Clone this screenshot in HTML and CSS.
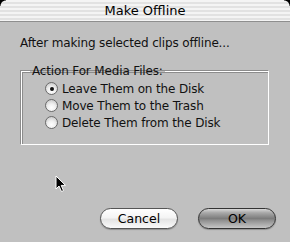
FILE: index.html
```html
<!DOCTYPE html>
<html>
    <head>
        <title>Make Offline</title>
        <link rel="stylesheet" href="styles.css">
    </head>
    <body>
    <div class="window">
        <header class="titlebar">
            <span class="corner left"></span>
            <h1>Make Offline</h1>
            <span class="corner right"></span>
        </header>
        <section class="content">
            <p class="intro">After making selected clips offline...</p>

            <fieldset class="group">
                <legend>Action For Media Files:</legend>
                <label class="radio"><span class="dot checked"></span>Leave Them on the Disk</label>
                <label class="radio"><span class="dot"></span>Move Them to the Trash</label>
                <label class="radio"><span class="dot"></span>Delete Them from the Disk</label>
            </fieldset>

            <div class="buttons">
                <button class="btn">Cancel</button>
                <button class="btn default">OK</button>
            </div>
        </section>

        <svg class="cursor" width="12" height="18" viewBox="0 0 12 18">
            <path d="M1 1 L1 14 L4 11 L6.5 16.5 L8.5 15.6 L6.2 10.4 L10.5 10.4 Z" fill="#000" stroke="#fff" stroke-width="1"/>
        </svg>
    </div>
    </body>
</html>
```

FILE: styles.css
```css
body{
    margin: 0;
    background-color: #c0c0c0;
    font-family: "DejaVu Sans", Verdana, sans-serif;
    font-size: 12px;
    letter-spacing: -0.15px;
    color: #111;
}

.window{
    position: relative;
    width: 290px;
    height: 242px;
    overflow: hidden;
    background-color: #c0c0c0;
}

.titlebar{
    position: relative;
    height: 21px;
    display: flex;
    align-items: center;
    justify-content: center;
    border-bottom: 1px solid #8e8e8e;
    background: repeating-linear-gradient(to bottom, #f4f4f4 0px, #f4f4f4 2px, #e2e2e2 2px, #e2e2e2 4px);
}

.titlebar h1{
    margin: 0;
    font-size: 13px;
    font-weight: normal;
    letter-spacing: 0;
    color: #000;
}

.corner{
    position: absolute;
    top: 0;
    width: 6px;
    height: 6px;
    background: #000;
}
.corner.left{
    left: 0;
    -webkit-mask: radial-gradient(circle at 6px 6px, transparent 5px, #000 6px);
}
.corner.right{
    right: 0;
    -webkit-mask: radial-gradient(circle at 0px 6px, transparent 5px, #000 6px);
}

.content{
    padding: 14px 21px 0 20px;
}

.intro{
    margin: 0 0 14px 0;
}

.group{
    margin: 0 0 0 1px;
    padding: 2px 10px 9px 23px;
    border: 1px solid #fff;
    box-shadow: inset 1px 1px 0 #8c8c8c, -1px -1px 0 #8c8c8c;
    height: 81px;
    box-sizing: border-box;
}

.group legend{
    padding: 0 2px;
    margin-left: -15px;
}

.radio{
    display: flex;
    align-items: center;
    height: 17px;
}

.dot{
    width: 11px;
    height: 11px;
    margin-right: 4px;
    border-radius: 50%;
    border: 1px solid #6a6a6a;
    background: radial-gradient(circle at 50% 70%, #ffffff 0%, #f0f0f0 40%, #bdbdbd 100%);
    position: relative;
}
.dot.checked::after{
    content: "";
    position: absolute;
    left: 3.5px;
    top: 3.5px;
    width: 4px;
    height: 4px;
    border-radius: 50%;
    background: #111;
}

.buttons{
    display: flex;
    justify-content: flex-end;
    gap: 20px;
    margin-top: 63px;
    margin-right: -7px;
}

.btn{
    width: 78px;
    height: 21px;
    border-radius: 11px;
    border: 1px solid #555;
    font-family: "DejaVu Sans", Verdana, sans-serif;
    font-size: 12.5px;
    color: #000;
    padding: 0;
    background: linear-gradient(to bottom, #ffffff 0%, #f4f4f4 45%, #e4e4e4 55%, #fafafa 100%);
    box-shadow: 0 1px 1px rgba(0,0,0,0.25);
}

.btn.default{
    border-color: #333;
    background: linear-gradient(to bottom, #d8d8d8 0%, #a8a8a8 20%, #7c7c7c 50%, #909090 60%, #c6c6c6 100%);
}

.cursor{
    position: absolute;
    left: 55px;
    top: 175px;
}
```
